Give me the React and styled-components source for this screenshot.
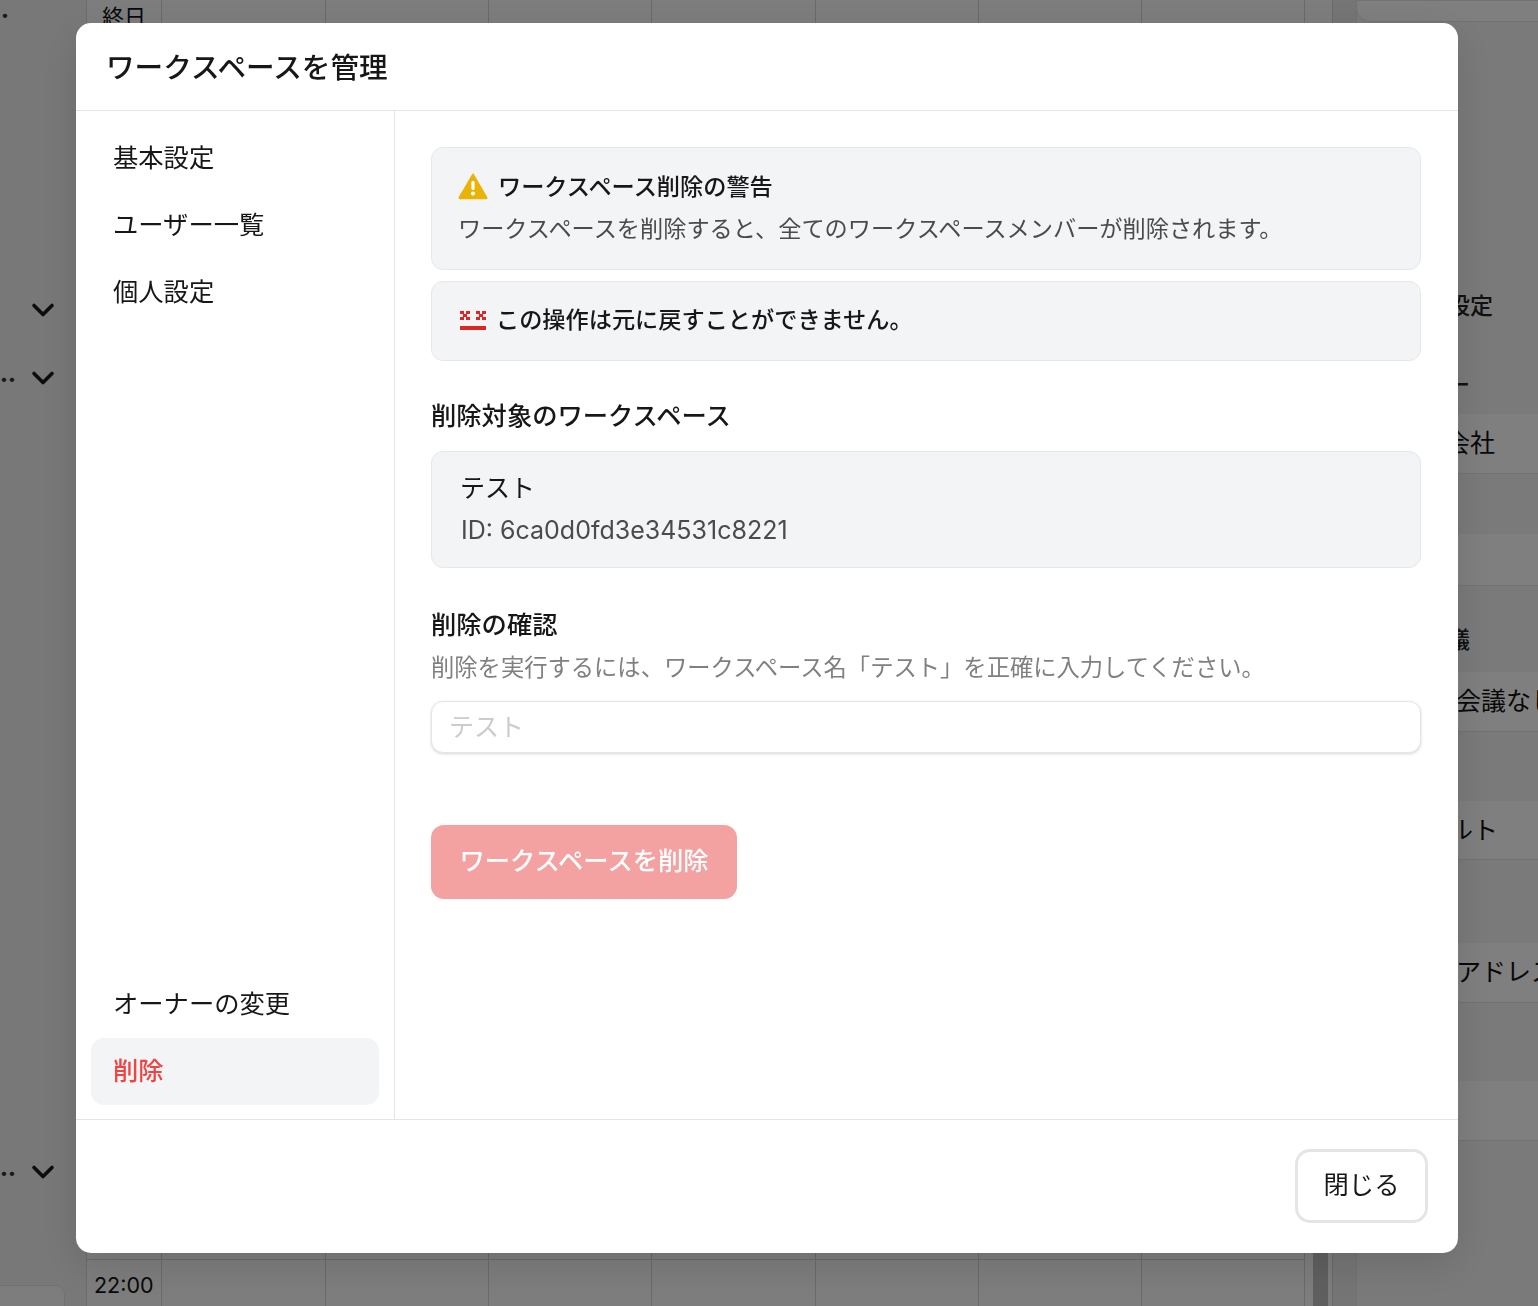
import React from "react";
import styled, { createGlobalStyle } from "styled-components";
import { ChevronDown } from "lucide-react";

const GlobalStyle = createGlobalStyle`
  html, body {
    margin: 0;
    padding: 0;
    overflow: hidden;
    background: #fff;
    font-family: Inter, "Noto Sans CJK JP", sans-serif;
    color: #171717;
  }
  * { box-sizing: border-box; }
`;

const WarningIcon = () => (
  <svg width="30" height="28" viewBox="0 0 30 28">
    <path
      d="M15 2.2 L28.6 25.4 Q29 26.6 27.6 26.6 L2.4 26.6 Q1 26.6 1.4 25.4 Z"
      fill="#eab308"
      stroke="#eab308"
      strokeWidth="1.5"
      strokeLinejoin="round"
    />
    <rect x="13.4" y="9" width="3.2" height="9" rx="1.4" fill="#fff" />
    <circle cx="15" cy="21.6" r="2" fill="#fff" />
  </svg>
);

const NoEntryIcon = () => (
  <svg width="28" height="22" viewBox="0 0 28 22" shapeRendering="crispEdges">
    <g fill="#dc2626">
      <rect x="2" y="3" width="4" height="3" />
      <rect x="8" y="3" width="4" height="3" />
      <rect x="5" y="6" width="4" height="3" />
      <rect x="2" y="9" width="4" height="3" />
      <rect x="8" y="9" width="4" height="3" />
      <rect x="18" y="3" width="4" height="3" />
      <rect x="24" y="3" width="4" height="3" />
      <rect x="21" y="6" width="4" height="3" />
      <rect x="18" y="9" width="4" height="3" />
      <rect x="24" y="9" width="4" height="3" />
      <rect x="2" y="18" width="26" height="4" />
    </g>
  </svg>
);

const columns = [0, 1, 2, 3, 4, 5, 6];

export default function App() {
  return (
    <>
      <GlobalStyle />
      <Page>
        <LeftRail>
          <RailDot>•</RailDot>
          <RailRow $top={254}>
            <ChevronDown size={36} strokeWidth={2.4} />
          </RailRow>
          <RailRow>
            <RailDots>••</RailDots>
            <ChevronDown size={36} strokeWidth={2.4} />
          </RailRow>
          <RailRow $top={726}>
            <RailDots>••</RailDots>
            <ChevronDown size={36} strokeWidth={2.4} />
          </RailRow>
          <RailCard />
        </LeftRail>

        <Calendar>
          <TimeCell>終日</TimeCell>
          {columns.map((c) => (
            <DayCell key={c} />
          ))}
          <TimeCell $last>22:00</TimeCell>
          {columns.map((c) => (
            <DayCell key={c} $last />
          ))}
        </Calendar>

        <ScrollTrack>
          <ScrollThumb />
        </ScrollTrack>
        <Gutter />

        <RightPanel>
          <TopCard />
          <PanelLabel $top={269}>予定の設定</PanelLabel>
          <PanelLabel $top={49}>メンバー</PanelLabel>
          <PanelBox $top={14} $h={60} $inset={13}>テスト会社</PanelBox>
          <PanelBox $top={60} $h={52} />
          <PanelLabel $top={39}>定例会議</PanelLabel>
          <PanelBox $top={17} $h={60} $inset={24}>社内の会議なし</PanelBox>
          <PanelBox $top={69} $h={59} $inset={16}>デフォルト</PanelBox>
          <PanelBox $top={83} $h={60} $inset={24}>メールアドレス</PanelBox>
          <PanelBox $top={78} $h={60} />
        </RightPanel>
      </Page>

      <Overlay>
        <Dialog>
          <DialogHeader>ワークスペースを管理</DialogHeader>
          <DialogBody>
            <Sidebar>
              <NavGroup>
                <NavItem>基本設定</NavItem>
                <NavItem>ユーザー一覧</NavItem>
                <NavItem>個人設定</NavItem>
              </NavGroup>
              <NavGroup>
                <NavItem>オーナーの変更</NavItem>
                <NavItem $active>削除</NavItem>
              </NavGroup>
            </Sidebar>

            <Main>
              <Card $pad="17px 26px 19px">
                <CardTitle>
                  <WarningIcon />
                  <TitleText>ワークスペース削除の警告</TitleText>
                </CardTitle>
                <CardText>
                  ワークスペースを削除すると、全てのワークスペースメンバーが削除されます。
                </CardText>
              </Card>
              <Card $pad="16px 26px 20px" $top={11}>
                <CardTitle>
                  <NoEntryIcon />
                  <TitleText>この操作は元に戻すことができません。</TitleText>
                </CardTitle>
              </Card>

              <SectionTitle $top={34}>削除対象のワークスペース</SectionTitle>
              <Card $pad="15px 29px 16px" $top={14}>
                <WorkspaceName>テスト</WorkspaceName>
                <WorkspaceId>ID: 6ca0d0fd3e34531c8221</WorkspaceId>
              </Card>

              <SectionTitle $top={36}>削除の確認</SectionTitle>
              <Hint>
                削除を実行するには、ワークスペース名「テスト」を正確に入力してください。
              </Hint>
              <ConfirmInput placeholder="テスト" />
              <DeleteButton disabled>ワークスペースを削除</DeleteButton>
            </Main>
          </DialogBody>
          <DialogFooter>
            <CloseButton>閉じる</CloseButton>
          </DialogFooter>
        </Dialog>
      </Overlay>
    </>
  );
}

const Page = styled.div`
  display: flex;
  width: 1538px;
  height: 1306px;
  overflow: hidden;
  background: #f5f5f5;
`;

const LeftRail = styled.div`
  position: relative;
  width: 86px;
  flex-shrink: 0;
  display: flex;
  flex-direction: column;
  background: #f1f1f1;
`;

const RailDot = styled.div`
  height: 22px;
  padding-left: 1px;
  font-size: 14px;
  line-height: 30px;
  color: #333;
`;

const RailRow = styled.div`
  display: flex;
  align-items: center;
  justify-content: flex-end;
  height: 68px;
  margin-top: ${(p) => p.$top || 0}px;
  padding-right: 25px;
  color: #1a1a1a;
`;

const RailDots = styled.span`
  flex: 1;
  font-size: 14px;
  color: #333;
`;

const RailCard = styled.div`
  position: absolute;
  left: -10px;
  bottom: -20px;
  width: 75px;
  height: 41px;
  background: #fbfbfb;
  border: 1px solid #e4e4e4;
  border-radius: 10px;
`;

const Calendar = styled.div`
  display: grid;
  grid-template-columns: 75.4px repeat(7, 163.3px);
  grid-template-rows: 1259px 47px;
  width: 1220px;
  flex-shrink: 0;
  background: #fbfbfb;
  border-left: 1px solid #d8d8d8;
`;

const TimeCell = styled.div`
  padding: ${(p) => (p.$last ? "10px 0 0 7px" : "2px 0 0 15px")};
  font-size: ${(p) => (p.$last ? "21.5px" : "22px")};
  line-height: 30px;
  color: #111;
  border-right: 1px solid #d4d4d4;
  border-top: ${(p) => (p.$last ? "1px solid #d4d4d4" : "none")};
`;

const DayCell = styled.div`
  border-right: 1px solid #d4d4d4;
  border-top: ${(p) => (p.$last ? "1px solid #d4d4d4" : "none")};
`;

const ScrollTrack = styled.div`
  width: 27px;
  flex-shrink: 0;
  padding: 200px 0 0 7px;
  background: #fbfbfb;
  border-right: 1px solid #d4d4d4;
`;

const ScrollThumb = styled.div`
  width: 15px;
  height: 100%;
  background: #bfbfbf;
`;

const Gutter = styled.div`
  width: 23px;
  flex-shrink: 0;
  background: #ebebeb;
`;

const RightPanel = styled.div`
  flex: 1;
  display: flex;
  flex-direction: column;
  min-width: 0;
  border-left: 1px solid #e2e2e2;
`;

const TopCard = styled.div`
  height: 22px;
  margin: 0 -40px 0 -1px;
  background: #fff;
  border: 1px solid #e4e4e4;
  border-radius: 0 0 0 14px;
  flex-shrink: 0;
`;

const PanelLabel = styled.div`
  height: 30px;
  margin-top: ${(p) => p.$top}px;
  padding-left: 21px;
  font-size: 23px;
  line-height: 30px;
  font-weight: 500;
  color: #222;
  white-space: nowrap;
  flex-shrink: 0;
`;

const PanelBox = styled.div`
  display: flex;
  align-items: center;
  height: ${(p) => p.$h}px;
  margin-top: ${(p) => p.$top}px;
  margin-right: -60px;
  padding: 0 0 5px ${(p) => p.$inset || 0}px;
  font-size: 25px;
  color: #111;
  white-space: nowrap;
  background: #fff;
  border-bottom: 1px solid #e4e4e4;
  flex-shrink: 0;
`;

const Overlay = styled.div`
  position: fixed;
  inset: 0;
  padding: 23px 0 0 76px;
  background: rgba(0, 0, 0, 0.5);
`;

const Dialog = styled.div`
  display: flex;
  flex-direction: column;
  width: 1382px;
  height: 1230px;
  background: #fff;
  border-radius: 15px;
  overflow: hidden;
  box-shadow: 0 12px 40px rgba(0, 0, 0, 0.12);
`;

const DialogHeader = styled.div`
  display: flex;
  align-items: center;
  height: 88px;
  padding: 0 30px 2px;
  font-size: 28.6px;
  font-weight: 500;
  color: #171717;
  border-bottom: 1.5px solid #e5e5e5;
  flex-shrink: 0;
`;

const DialogBody = styled.div`
  flex: 1;
  display: flex;
  min-height: 0;
`;

const Sidebar = styled.nav`
  width: 319px;
  flex-shrink: 0;
  display: flex;
  flex-direction: column;
  justify-content: space-between;
  padding: 14px 15px;
  border-right: 1.5px solid #e5e5e5;
`;

const NavGroup = styled.div`
  display: flex;
  flex-direction: column;
`;

const NavItem = styled.div`
  display: flex;
  align-items: center;
  height: 67px;
  padding: 0 0 6px 22px;
  font-size: 25.3px;
  color: ${(p) => (p.$active ? "#ef4444" : "#171717")};
  font-weight: ${(p) => (p.$active ? 500 : 400)};
  background: ${(p) => (p.$active ? "#f3f4f6" : "transparent")};
  border-radius: 13px;
`;

const Main = styled.main`
  flex: 1;
  display: flex;
  flex-direction: column;
  padding: 36px 37px 0 36px;
  min-width: 0;
`;

const Card = styled.div`
  margin-top: ${(p) => p.$top || 0}px;
  padding: ${(p) => p.$pad};
  background: #f3f4f6;
  border: 1.5px solid #e5e7eb;
  border-radius: 12px;
`;

const CardTitle = styled.div`
  display: flex;
  align-items: center;
  gap: 10px;
  height: 42px;
`;

const TitleText = styled.span`
  padding-bottom: 2px;
  font-size: 23.2px;
  font-weight: 500;
  color: #171717;
`;

const CardText = styled.div`
  height: 43px;
  font-size: 23.2px;
  line-height: 44px;
  color: #4b4b4b;
  white-space: nowrap;
`;

const SectionTitle = styled.div`
  margin-top: ${(p) => p.$top}px;
  font-size: 25.3px;
  line-height: 42px;
  font-weight: 500;
  color: #171717;
`;

const WorkspaceName = styled.div`
  margin-left: -1px;
  font-size: 25px;
  line-height: 42px;
  color: #171717;
`;

const WorkspaceId = styled.div`
  font-size: 25px;
  line-height: 42px;
  color: #4b4b4b;
`;

const Hint = styled.div`
  margin-top: 4px;
  font-size: 23.3px;
  line-height: 36px;
  color: #808080;
  white-space: nowrap;
`;

const ConfirmInput = styled.input`
  width: 100%;
  height: 52px;
  margin-top: 15px;
  padding: 0 17px;
  font-family: inherit;
  font-size: 25px;
  background: #fff;
  border: 1px solid #e5e5e5;
  border-radius: 12px;
  box-shadow: 0 1px 3px rgba(0, 0, 0, 0.16);
  outline: none;

  &::placeholder {
    color: #cccccc;
  }
`;

const DeleteButton = styled.button`
  align-self: flex-start;
  width: 306px;
  height: 74px;
  margin-top: 72px;
  padding: 0 0 6px;
  font-family: inherit;
  font-size: 25.3px;
  font-weight: 500;
  color: #fff;
  background: #f4a1a1;
  border: none;
  border-radius: 13px;
`;

const DialogFooter = styled.div`
  display: flex;
  align-items: flex-start;
  justify-content: flex-end;
  height: 134px;
  padding: 29px 30px 0 0;
  border-top: 1.5px solid #e5e5e5;
  flex-shrink: 0;
`;

const CloseButton = styled.button`
  width: 133px;
  height: 74px;
  padding: 0 0 6px;
  font-family: inherit;
  font-size: 25.3px;
  color: #171717;
  background: #fff;
  border: 3px solid #e5e5e5;
  border-radius: 15px;
`;
